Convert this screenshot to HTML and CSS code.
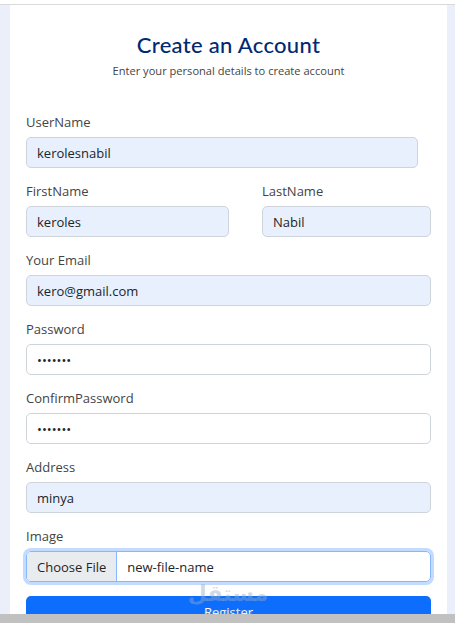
FILE: index.html
```html
<!DOCTYPE html>
<html lang="en">
<head>
    <meta charset="UTF-8">
    <meta name="viewport" content="width=device-width, initial-scale=1.0">
    <title>Register</title>
    <link rel="stylesheet" href="styles.css">
</head>
<body>
    <div class="topbar"></div>

    <div class="card">
        <div class="card-head">
            <h1>Create an Account</h1>
            <p>Enter your personal details to create account</p>
        </div>

        <form class="register-form">
            <div class="form-group narrow">
                <label for="username">UserName</label>
                <input type="text" id="username" class="form-control autofill" value="kerolesnabil">
            </div>

            <div class="form-row">
                <div class="form-group">
                    <label for="firstname">FirstName</label>
                    <input type="text" id="firstname" class="form-control autofill" value="keroles">
                </div>
                <div class="form-group">
                    <label for="lastname">LastName</label>
                    <input type="text" id="lastname" class="form-control autofill" value="Nabil">
                </div>
            </div>

            <div class="form-group">
                <label for="email">Your Email</label>
                <input type="email" id="email" class="form-control autofill" value="kero@gmail.com">
            </div>

            <div class="form-group">
                <label for="password">Password</label>
                <input type="password" id="password" class="form-control" value="1234567">
            </div>

            <div class="form-group">
                <label for="confirm">ConfirmPassword</label>
                <input type="password" id="confirm" class="form-control" value="1234567">
            </div>

            <div class="form-group">
                <label for="address">Address</label>
                <input type="text" id="address" class="form-control autofill" value="minya">
            </div>

            <div class="form-group">
                <label>Image</label>
                <div class="file-field">
                    <span class="file-btn">Choose File</span>
                    <span class="file-name">new-file-name</span>
                </div>
            </div>

            <button type="submit" class="btn-register">Register</button>
        </form>

        <div class="watermark">
            <span class="wm-ar">مستقل</span>
            <span class="wm-en">mostaql.com</span>
        </div>
    </div>

    <div class="scrollbar"></div>
</body>
</html>
```

FILE: styles.css
```css
:root {
    --page-bg: #ebeff9;
    --title-color: #012970;
    --text-color: #444444;
    --input-border: #ced4da;
    --autofill-bg: #e8f0fe;
    --primary: #0d6efd;
}

* {
    margin: 0;
    padding: 0;
    box-sizing: border-box;
}

body {
    background: var(--page-bg);
    font-family: 'Open Sans', sans-serif;
    color: var(--text-color);
    height: 623px;
    overflow: hidden;
}

.topbar {
    height: 5px;
    background: #ffffff;
    border-bottom: 1px solid #d9d9d9;
}

.card {
    position: relative;
    background: #ffffff;
    margin: 0 8px 0 10px;
    padding: 0 16px 20px;
    height: 618px;
}

.card-head {
    text-align: center;
    padding-top: 27px;
    margin-bottom: 34px;
}

.card-head h1 {
    font-family: 'Lato', sans-serif;
    font-weight: 500;
    font-size: 22px;
    line-height: 26px;
    letter-spacing: 0.3px;
    color: var(--title-color);
    margin-bottom: 5px;
}

.card-head p {
    font-size: 11.1px;
    line-height: 16px;
}

.form-group {
    margin-bottom: 14px;
}

.form-group.narrow {
    margin-right: 13px;
}

.form-row {
    display: grid;
    grid-template-columns: 203px 1fr;
    column-gap: 33px;
}

label {
    display: block;
    font-size: 13px;
    line-height: 18px;
    margin-bottom: 6px;
}

.form-control {
    display: block;
    width: 100%;
    height: 31px;
    padding: 0 10px;
    border: 1px solid var(--input-border);
    border-radius: 5px;
    font-family: 'Open Sans', sans-serif;
    font-size: 13px;
    color: #212529;
    background: #ffffff;
    outline: none;
}

.form-control.autofill {
    background: var(--autofill-bg);
}

.file-field {
    display: flex;
    height: 31px;
    border: 1px solid #86b7fe;
    border-radius: 5px;
    box-shadow: 0 0 0 3px rgba(13, 110, 253, 0.25);
    overflow: hidden;
    font-size: 13px;
    color: #212529;
}

.file-btn {
    display: flex;
    align-items: center;
    padding: 0 10px;
    background: #e9ecef;
    border-right: 1px solid #86b7fe;
}

.file-name {
    display: flex;
    align-items: center;
    padding: 0 10px;
}

.btn-register {
    display: block;
    width: 100%;
    height: 31px;
    border: none;
    border-radius: 5px;
    background: var(--primary);
    color: #ffffff;
    font-family: 'Open Sans', sans-serif;
    font-size: 13px;
}

/* site watermark over the button */
.watermark {
    position: absolute;
    left: 186px;
    top: 577px;
    width: 64px;
    display: flex;
    flex-direction: column;
    align-items: center;
    color: rgba(150, 170, 200, 0.45);
    pointer-events: none;
}

.wm-ar {
    font-family: 'DejaVu Sans', sans-serif;
    font-weight: bold;
    font-size: 22px;
    line-height: 24px;
}

.wm-en {
    font-size: 8px;
    line-height: 9px;
}

.scrollbar {
    position: fixed;
    left: 0;
    right: 0;
    bottom: 0;
    height: 9px;
    background: #c1c1c1;
}
```
